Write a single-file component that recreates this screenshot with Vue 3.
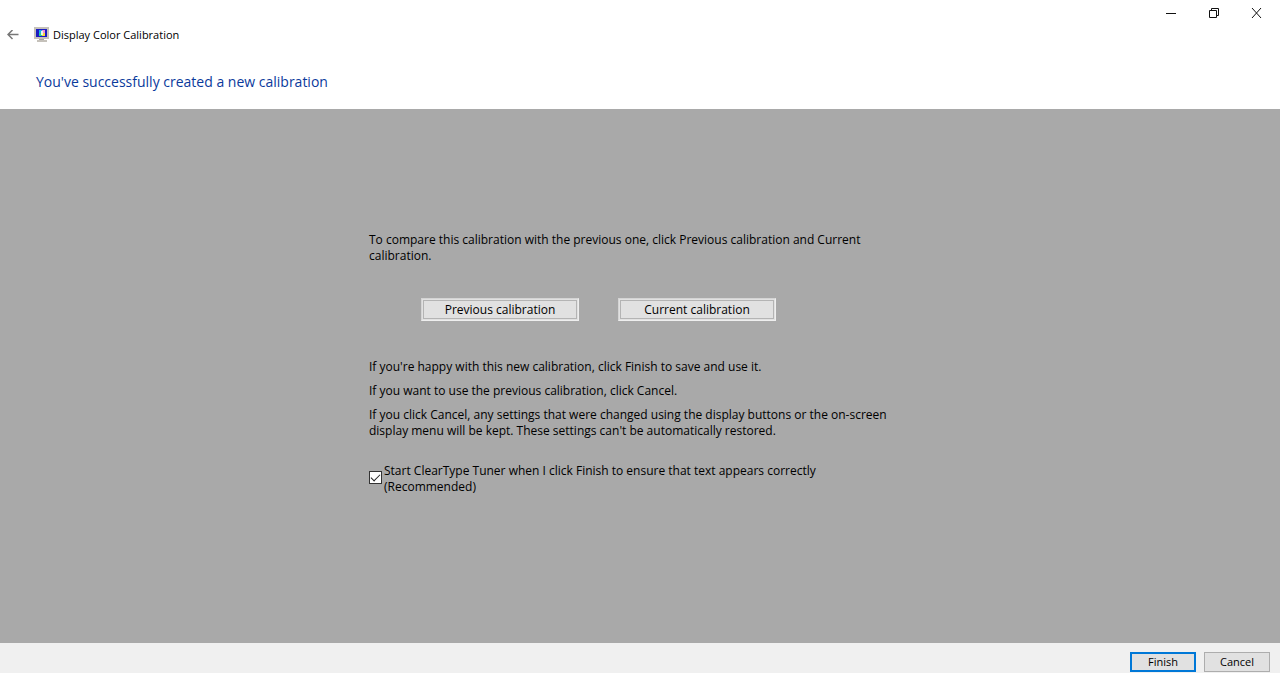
<template>
  <div class="wizard">
    <header class="header">
      <div class="window-controls">
        <button class="control" aria-label="Minimize">
          <svg width="11" height="11" viewBox="0 0 11 11"><path d="M1 5.5h10" /></svg>
        </button>
        <button class="control" aria-label="Restore">
          <svg width="11" height="11" viewBox="0 0 11 11">
            <path d="M1.5 2.5h7v7h-7zM3.5 2.5v-2h7v7h-2" />
          </svg>
        </button>
        <button class="control" aria-label="Close">
          <svg width="11" height="11" viewBox="0 0 11 11"><path d="M1 0l9 10M10 0l-9 10" /></svg>
        </button>
      </div>
      <div class="title-row">
        <button class="back" aria-label="Back">
          <svg width="12" height="11" viewBox="0 0 12 11"><path d="M5.5 0L1 4.5 5.5 9M1 4.5h10.5" /></svg>
        </button>
        <svg class="monitor" width="16" height="16" viewBox="0 0 16 16">
          <path fill="#c5c1ba" d="M0 0h15v12H0z" />
          <path fill="#1c1cc0" d="M2 2h11v8H2z" />
          <path fill="#18b0f0" d="M5 3h3v3H5z" />
          <path fill="#f090d8" d="M8 3h3v3H8z" />
          <path fill="#30d090" d="M5 6h3v3H5z" />
          <path fill="#f8d838" d="M8 6h3v3H8z" />
          <path fill="#e8f8f0" d="M7 4h2v4H7z" />
          <path fill="#aaa69f" d="M5 12h5v1H5z" />
          <path fill="#c5c1ba" d="M3 13h10v2H3z" />
        </svg>
        <span class="title">Display Color Calibration</span>
      </div>
      <h1>You've successfully created a new calibration</h1>
    </header>

    <main class="main">
      <div class="content">
        <p>To compare this calibration with the previous one, click Previous calibration and Current<br />calibration.</p>
        <div class="compare">
          <button class="btn" @click="selected = 'previous'">Previous calibration</button>
          <button class="btn" @click="selected = 'current'">Current calibration</button>
        </div>
        <div class="notes">
          <p>If you're happy with this new calibration, click Finish to save and use it.</p>
          <p>If you want to use the previous calibration, click Cancel.</p>
          <p>If you click Cancel, any settings that were changed using the display buttons or the on-screen<br />display menu will be kept. These settings can't be automatically restored.</p>
        </div>
        <div class="check-row">
          <input id="cleartype" type="checkbox" v-model="startTuner" />
          <label for="cleartype">Start ClearType Tuner when I click Finish to ensure that text appears correctly<br />(Recommended)</label>
        </div>
      </div>
    </main>

    <footer class="footer">
      <button class="action primary">Finish</button>
      <button class="action">Cancel</button>
    </footer>
  </div>
</template>

<script setup>
import { ref } from 'vue'

const startTuner = ref(true)
const selected = ref('current')
</script>

<style>
body {
  margin: 0;
}
</style>

<style scoped>
* {
  box-sizing: border-box;
}

.wizard {
  min-height: 100vh;
  display: flex;
  flex-direction: column;
  background-color: #fff;
  color: #000;
  font-family: 'Open Sans', 'Noto Sans', sans-serif;
  font-size: 12px;
  line-height: 16px;
}

button {
  font: inherit;
  color: inherit;
  padding: 0;
}

.header {
  padding-bottom: 17px;
}

.window-controls {
  display: flex;
  justify-content: flex-end;
  padding-right: 2px;
}

.control {
  width: 43px;
  height: 26px;
  border: 0;
  background: none;
  display: flex;
  align-items: center;
  justify-content: center;
}

.control path {
  fill: none;
  stroke: #111;
}

.title-row {
  display: flex;
  align-items: center;
  height: 18px;
  padding-left: 7px;
}

.back {
  border: 0;
  background: none;
  display: flex;
}

.back path {
  fill: none;
  stroke: #777;
  stroke-width: 1.5;
}

.monitor {
  margin: 0 3px 0 15px;
}

.title {
  font-size: 11px;
}

h1 {
  margin: 27px 0 0 36px;
  font-size: 14px;
  line-height: 21px;
  font-weight: 400;
  color: #0a3a9c;
}

.main {
  flex: 1;
  background-color: #a9a9a9;
  padding: 123px 20px 20px;
}

.content {
  max-width: 542px;
  margin: 0 auto;
}

p {
  margin: 0;
}

.compare {
  display: flex;
  gap: 39px;
  padding: 34px 0 38px 52px;
}

.btn {
  width: 158px;
  height: 23px;
  border: 1px solid #eee;
  border-top-color: #d4d4d4;
  border-left-color: #d4d4d4;
  outline: 1px solid #b4b4b4;
  outline-offset: -3px;
  background-color: #e1e1e1;
}

.notes {
  display: flex;
  flex-direction: column;
  gap: 8px;
}

.check-row {
  display: flex;
  align-items: flex-start;
  gap: 2px;
  margin-top: 24px;
}

.check-row input {
  appearance: none;
  width: 13px;
  height: 13px;
  margin: 8px 0 0;
  border: 1px solid #333;
  background-color: #fff;
  display: grid;
  place-items: center;
}

.check-row input:checked::after {
  content: '';
  width: 8px;
  height: 4px;
  border-left: 1px solid #222;
  border-bottom: 1px solid #222;
  transform: translateY(-1px) rotate(-45deg);
}

.footer {
  display: flex;
  justify-content: flex-end;
  gap: 8px;
  height: 30px;
  padding: 9px 10px 0;
  background-color: #f0f0f0;
}

.action {
  width: 66px;
  height: 20px;
  border: 1px solid #adadad;
  background-color: #e1e1e1;
  font-size: 11px;
}

.primary {
  border: 2px solid #0078d7;
}
</style>
